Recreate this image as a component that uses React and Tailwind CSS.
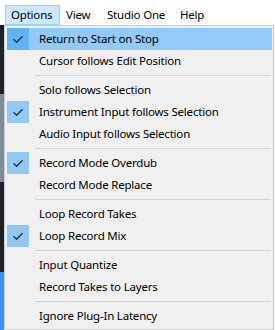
import React from "react";

const font = { fontFamily: '"Noto Sans", "Open Sans", sans-serif' };

const items = [
  { t: "Return to Start on Stop", c: true, h: true },
  { t: "Cursor follows Edit Position" },
  "sep",
  { t: "Solo follows Selection" },
  { t: "Instrument Input follows Selection", c: true },
  { t: "Audio Input follows Selection" },
  "sep",
  { t: "Record Mode Overdub", c: true },
  { t: "Record Mode Replace" },
  "sep",
  { t: "Loop Record Takes" },
  { t: "Loop Record Mix", c: true },
  "sep",
  { t: "Input Quantize" },
  { t: "Record Takes to Layers" },
  "sep",
  { t: "Ignore Plug-In Latency" },
];

function Check() {
  return (
    <svg width="12" height="9" viewBox="0 0 12 9" fill="none">
      <path d="M1.5 4.2 L4.6 7.2 L10.5 1.3" stroke="#2f3337" strokeWidth="1.4" />
    </svg>
  );
}

export default function App() {
  return (
    <div
      className="w-[275px] h-[330px] flex flex-col overflow-hidden bg-white text-[11.5px] tracking-[-0.2px] text-black"
      style={font}
    >
      <div className="h-[25px] flex pt-[5px] pl-[5px] bg-white">
        <div className="w-[55px] h-[20px] pl-[5px] border border-[#99d1ff] bg-[#cce8ff] flex items-center leading-none">
          Options
        </div>
        <div className="w-[41px] h-[20px] pl-[6px] flex items-center leading-none">View</div>
        <div className="w-[73px] h-[20px] pl-[6px] flex items-center leading-none">Studio One</div>
        <div className="w-[36px] h-[20px] pl-[6px] flex items-center leading-none">Help</div>
      </div>
      <div className="flex-1 flex">
        <div className="w-[4px] flex flex-col">
          <div className="h-[69px] bg-[#1c2228]"></div>
          <div className="h-[88px] bg-[#7b8d99]"></div>
          <div className="h-[90px] bg-[#1c2228]"></div>
          <div className="flex-1 bg-[#3a8ee8]"></div>
        </div>
        <div className="w-[270px] border border-[#cccccc] bg-[#f0f0f0] pt-[2px] pb-[1px] pl-[2px] pr-[1px] flex flex-col">
          {items.map((it, i) =>
            it === "sep" ? (
              <div key={i} className="h-[7px] flex items-center pl-[28px] pr-[1px]">
                <div className="h-px w-full bg-[#d4d4d4]"></div>
              </div>
            ) : (
              <div
                key={i}
                className={
                  "h-[22px] flex items-center " + (it.h ? "bg-[#91c9f7]" : "")
                }
              >
                <div
                  className={
                    "w-[22px] h-[22px] flex items-center justify-center " +
                    (it.c ? (it.h ? "bg-[#62b3f5]" : "bg-[#90c8f6]") : "")
                  }
                >
                  {it.c ? <Check /> : null}
                </div>
                <div className="pl-[10px] leading-none whitespace-nowrap">{it.t}</div>
              </div>
            )
          )}
        </div>
        <div className="w-px bg-[#f4f4f4]"></div>
      </div>
    </div>
  );
}
